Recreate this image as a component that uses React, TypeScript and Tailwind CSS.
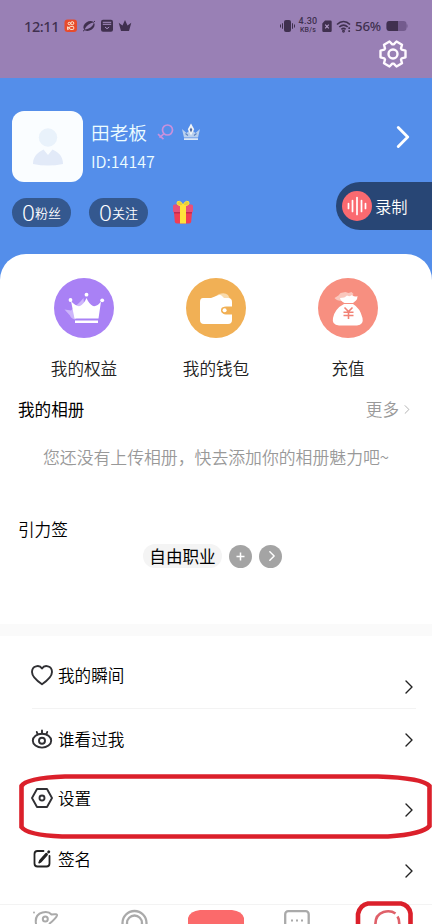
import type { ReactNode } from "react";

const Chevron = ({ className, width = 2 }: { className: string; width?: number }) => (
  <svg viewBox="0 0 8 14" className={className} fill="none" stroke="currentColor" strokeWidth={width} strokeLinecap="round" strokeLinejoin="round">
    <path d="M1 1l6 6-6 6" />
  </svg>
);

const StatusBar = () => (
  <div className="flex h-[52px] items-center pl-6 pr-[24px] text-[#40304f]">
    <span className="w-[40px] font-['Noto_Sans'] text-[14.5px] font-medium leading-none tracking-[-0.4px]">12:11</span>
    <svg width="68" height="14" viewBox="0 0 68 14" fill="none">
      <rect x="0.5" y="0.5" width="12.5" height="12.5" rx="3" fill="#e84b2c" />
      <g stroke="#fff0d8" strokeWidth="1">
        <circle cx="5.3" cy="4.5" r="1.2" />
        <circle cx="8.300" cy="4.200" r="1.500" />
        <rect x="5.700" y="7.400" width="4" height="3" rx="0.800" />
        <path d="M5.500 9L3.600 7.800v2.800l1.900-1.200" />
      </g>
      <ellipse cx="25" cy="7" rx="6" ry="4.500" transform="rotate(-32 25 7)" fill="#40304f" />
      <path d="M20.500 10.500C22.500 6.500 25.500 4 29.800 3.200 29.500 7 25.500 10 20.500 10.500z" fill="#9980b5" />
      <path d="M19 12.200l2-1.700M29.500 3.300L31 2" stroke="#40304f" />
      <rect x="37" y="0.700" width="12" height="12" rx="2" fill="#40304f" />
      <path d="M38.800 3.300h8.400M38.800 5.300h8.400M41 8l2 1.700L45.200 8" stroke="#a890c4" />
      <path d="M54.700 3.800l3.800 2.700L61 1l2.500 5.500 3.800-2.700-2.300 8.200h-8z" fill="#40304f" />
    </svg>
    <div className="ml-auto flex items-center">
      <svg width="15" height="14" viewBox="0 0 15 14" fill="#40304f">
        <rect x="4" y="1" width="7" height="12" rx="2" />
        <path d="M2 4.200h1v5.600H2zM12 4.200h1v5.600h-1zM0 5.500h1v3H0zM14 5.500h1v3h-1z" />
      </svg>
      <div className="mb-px ml-[3px] flex w-[20px] flex-col items-center whitespace-nowrap font-['Roboto'] font-medium">
        <span className="text-[9px] leading-[9px] tracking-[0.3px]">4.30</span>
        <span className="text-[7px] leading-[8px] tracking-[0.2px]">KB/s</span>
      </div>
      <svg className="ml-[4px]" width="10" height="13" viewBox="0 0 10 13">
        <path d="M3 .5h5.500a1.200 1.200 0 011.200 1.200v9a1.200 1.200 0 01-1.200 1.200h-7A1.200 1.200 0 01.3 10.700V3.500z" fill="#40304f" />
        <path d="M3.200 4.700l3.600 3.600M6.800 4.700L3.200 8.300" stroke="#b29cc8" strokeWidth="1.200" />
      </svg>
      <svg className="ml-[4px]" width="16" height="13" viewBox="0 0 16 13" fill="none" stroke="#40304f" strokeWidth="1.700">
        <path d="M1 4.500c4-3.800 9-3.800 13 0M3.300 7c2.700-2.500 5.800-2.500 8.400 0M5.400 9.300c1.500-1.200 2.800-1.200 4.200 0" />
        <circle cx="7.500" cy="11.300" r="0.600" />
        <path d="M13.200 7.300v1.700M13.200 10.300v1.700" />
      </svg>
      <span className="ml-[3px] mt-[2px] w-[29px] font-['Noto_Sans'] text-[13.3px] font-medium leading-none tracking-[-0.2px]">56%</span>
      <svg className="ml-[2px]" width="22" height="12" viewBox="0 0 22 12">
        <path d="M3.500 1h14A3 3 0 0120.500 4v4a3 3 0 01-3 3h-14A3 3 0 01.5 8V4a3 3 0 013-3z" fill="#735b8d" />
        <path d="M3.500 1H12v10H3.500A3 3 0 01.5 8V4a3 3 0 013-3z" fill="#40304f" />
        <path d="M20.500 4.500h1v3h-1z" fill="#735b8d" />
      </svg>
    </div>
  </div>
);

const Gear = () => (
  <svg width="28" height="28" viewBox="0 0 28 28" fill="none" stroke="#fffaff" strokeWidth="2.400" strokeLinejoin="round">
    <path d="M26.500 10.700V17.300L22.700 18.300 22 19.500 23 23.300 17.500 26.500 14.700 23.600H13.300L10.500 26.500 5 23.300 6 19.500 5.300 18.300 1.500 17.300V10.700L5.300 9.700 6 8.500 5 4.700 10.500 1.500 13.300 4.400H14.700L17.500 1.500 23 4.700 22 8.500 22.700 9.700z" />
    <circle cx="14" cy="14" r="4.500" />
  </svg>
);

const Avatar = () => (
  <div className="flex h-[71px] w-[71px] items-center justify-center rounded-[12px] bg-[#fafdff]">
    <svg width="32" height="40" viewBox="0 0 32 40">
      <circle cx="16" cy="10.500" r="9.200" fill="#e9f2fb" />
      <path d="M1 37c0-7.500 4.500-11.500 10.500-14.500L16 28l4.500-5.500C27 25.500 31 29.500 31 37q-15 3-30 0z" fill="#e2eaf8" />
    </svg>
  </div>
);

const CountPill = ({ label }: { label: string }) => (
  <div className="flex h-[29px] w-[59px] items-center rounded-full bg-[#34588f] pl-[10px] text-white">
    <span className="w-[13px] font-['Noto_Sans'] text-[22.5px] leading-[29px]">0</span>
    <span className="text-[13px] leading-[27px]">{label}</span>
  </div>
);

const Gift = () => (
  <svg width="22" height="24" viewBox="0 0 22 24">
    <path d="M1 6q0-1.500 1.500-1.500h17Q21 4.500 21 6v5q0 1.500-1.500 1.500h-17Q1 12.500 1 11z" fill="#e85179" />
    <path d="M2 12.500h18l-.8 9q-.2 2-2 2H4.800q-1.800 0-2-2z" fill="#f23d52" />
    <path d="M2 12h18v1.500H2z" fill="#c22b52" />
    <path d="M8 5h6v18.500H8z" fill="#ffe33b" />
    <path d="M11 5.500Q5.500 6 5 3.500T7.500 1.300Q10 2 11 5.500zQ16.500 6 17 3.500T14.500 1.300Q12 2 11 5.500z" fill="#e6cf38" stroke="#ffe33b" />
  </svg>
);

const Profile = () => (
  <section className="h-[176px] bg-[#548eea] pt-[33px]">
    <div className="flex pl-[12px] pr-[22px]">
      <Avatar />
      <div className="ml-[8px] pt-[9px] text-[#edfdff]">
        <div className="flex h-[24px] items-center">
          <span className="text-[18.7px] leading-[24px]">田老板</span>
          <svg className="ml-[10px]" width="17" height="17" viewBox="0 0 17 17" fill="none" stroke="#c991dc" strokeWidth="1.700">
            <circle cx="10.500" cy="6" r="5" />
            <path d="M7 9.700l-4.500 4M1 10.200l5.500 5" />
          </svg>
          <svg className="ml-[7px]" width="20" height="18" viewBox="0 0 20 18">
            <path d="M1 6l4.500 4 2-1.500L10 1l2.500 7.500 2 1.500L19 6l-2 8.500H3z" fill="#b9d0ee" />
            <path d="M4.500 10.500l2.500 2M15.500 10.500l-2.500 2" stroke="#5d83c1" strokeWidth="1.200" />
            <path d="M10 0.500l3.200 5.800L10 12.500 6.800 6.300z" fill="#f2f5f8" />
            <path d="M10 4.500l1.300 2.200L10 9.500 8.700 6.700z" fill="#516b9e" />
            <path d="M3 15.200h14v1.800H3z" fill="#dce8f6" />
          </svg>
        </div>
        <div className="mt-[5px] text-[16px] leading-[24px]">ID:14147</div>
      </div>
      <Chevron className="ml-auto mt-[15px] h-[22px] w-[14px] text-white" width={1.8} />
    </div>
    <div className="flex">
      <div className="flex items-center gap-[18px] pl-[12px] pt-[13px]">
        <CountPill label="粉丝" />
        <CountPill label="关注" />
        <div className="-mt-px ml-[6px]">
          <Gift />
        </div>
      </div>
      <div className="ml-auto flex h-[48px] w-[96px] items-center rounded-l-full bg-[#284675] pl-[6px]">
        <svg width="30" height="30" viewBox="0 0 30 30">
          <circle cx="15" cy="15" r="15" fill="#fa6a70" />
          <path d="M6.500 12.500v5M10.500 9.500v11M15 6.500v17M19.500 9.500v11M23.500 12.500v5" stroke="#fff" strokeWidth="1.700" strokeLinecap="round" />
        </svg>
        <span className="ml-[3px] text-[16.3px] leading-none text-white">录制</span>
      </div>
    </div>
  </section>
);

const CrownIcon = () => (
  <svg width="60" height="60" viewBox="0 0 60 60">
    <circle cx="30" cy="30" r="30" fill="#a981f5" />
    <path d="M10.500 31.500l6.500 1 9.500-9 3-3.500 1 12-9.500 9.500q-4-1-5-4z" fill="#cdb5fb" />
    <g fill="#fff">
      <circle cx="16.500" cy="22" r="1.900" />
      <circle cx="32.500" cy="16.700" r="1.900" />
      <circle cx="48.200" cy="22.300" r="1.900" />
      <path d="M17 23q5 6 9 5 4-2 6.500-8 2.500 6 6.500 8 4 1 8-4.500L44.500 40.500H20.500zM21 42.500h23V45H21z" />
    </g>
  </svg>
);

const WalletIcon = () => (
  <svg width="60" height="60" viewBox="0 0 60 60">
    <circle cx="30" cy="30" r="30" fill="#f1b055" />
    <path d="M24 22l9-6q6-2 9 1l2 4z" fill="#f9dbac" />
    <path d="M17 20h8l8-3q2-.5 3 1l2 2h4q4 0 4 4v4.500h-6a4 4 0 000 8h6V42q0 4-4 4H18q-4 0-4-4V24q0-4 3-4z" fill="#fff" />
    <path d="M46 29.500h-6.500a3 3 0 000 5.500H46z" fill="#f1b055" />
    <circle cx="38.300" cy="32.300" r="3.300" fill="#f1b055" />
    <circle cx="38.600" cy="32.300" r="2" fill="#fff" />
  </svg>
);

const MoneyIcon = () => (
  <svg width="60" height="60" viewBox="0 0 60 60">
    <circle cx="30" cy="30" r="30" fill="#f78f80" />
    <path d="M16.500 20l4-2.500 2-2.500 5-1 3 1 3-1 2 2-4 4-7 3q-6 0-8-3z" fill="#fac7bd" />
    <path d="M22 20q5 0 7-2.500 3 1.500 5-.5 3 2.500 5.500 1 0 3-1.500 4.500L35 25h-8.500Q22.500 23 22 20zM26 26h9q7 4 9.500 14 1.500 7-5.500 7.500H21Q13.500 47 15 40q2-9.500 11-14z" fill="#fff" />
    <path d="M26.500 29.500l4 4 4-4M25.500 34.200h10M25.500 37.500h10M30.500 33v8" fill="none" stroke="#f18175" strokeWidth="1.600" />
  </svg>
);

const Shortcut = ({ icon, label }: { icon: ReactNode; label: string }) => (
  <div className="flex w-[132px] flex-col items-center">
    {icon}
    <span className="mt-[18px] text-[16.6px] leading-[24px] text-[#222]">{label}</span>
  </div>
);

const HeartIcon = () => (
  <svg width="24" height="24" viewBox="0 0 24 24" fill="none" stroke="#303034" strokeWidth="1.900" strokeLinejoin="round">
    <path d="M12 21.200C8 18.500 2 14 2 9 2 2.500 9.500 1.500 12 5.500 14.500 1.500 22 2.500 22 9 22 14 16 18.500 12 21.200z" />
  </svg>
);

const EyeIcon = () => (
  <svg width="24" height="24" viewBox="0 0 24 24" fill="none" stroke="#303034" strokeWidth="1.900" strokeLinecap="round">
    <ellipse cx="12" cy="13.700" rx="9.200" ry="6.900" />
    <path d="M12 3.500v3M6.800 5l.8 2.200M17.200 5l-.8 2.200" />
    <circle cx="12" cy="13.700" r="3" />
  </svg>
);

const HexIcon = () => (
  <svg width="24" height="24" viewBox="0 0 24 24" fill="none" stroke="#303034" strokeWidth="1.900" strokeLinejoin="round">
    <path d="M7 3h10l5 9-5 9H7l-5-9z" />
    <circle cx="12" cy="12" r="2.500" />
  </svg>
);

const EditIcon = () => (
  <svg width="24" height="24" viewBox="0 0 24 24" fill="none" stroke="#222" strokeWidth="1.800" strokeLinecap="round">
    <path d="M13.500 4H7.500Q4.500 4 4.500 7v9.500q0 3 3 3h9q3 0 3-3V9" />
    <path d="M10.500 14L16.300 7.500" strokeWidth="3.200" />
    <path d="M9.200 15.500l1-1" />
    <path d="M18.600 5l.2-.2" strokeWidth="2.800" />
  </svg>
);

const MenuRow = ({ icon, label, className, arrow }: { icon: ReactNode; label: string; className: string; arrow: string }) => (
  <div className={`flex items-start pl-[30px] pr-[19px] ${className}`}>
    {icon}
    <span className="ml-[4px] text-[16.6px] leading-[24px] text-black">{label}</span>
    <Chevron className={`ml-auto h-[14px] w-[8px] text-[#222] ${arrow}`} width={1.4} />
  </div>
);

const TabBar = () => (
  <nav className="h-[20px] overflow-hidden border-t border-[#f3f3f3] bg-white">
    <svg width="432" height="19" viewBox="0 905 432 19" fill="none">
      <g stroke="#aaa" strokeWidth="2">
        <path d="M36.500 926q-3-11 6-13.500 6-1.500 9 2 6-1 5.500 1-1 3-8 8.500" />
        <circle cx="45.300" cy="919" r="2.500" />
        <circle cx="34" cy="912.500" r="0.400" strokeWidth="1.300" />
        <circle cx="134.500" cy="923" r="12" strokeWidth="2.300" />
        <circle cx="134.500" cy="923" r="7.500" strokeWidth="2.300" />
        <rect x="285.200" y="911.200" width="23.500" height="22" rx="3" strokeWidth="2.300" />
        <path d="M291 920.500h2M296 920.500h2M301 920.500h2" />
      </g>
      <path d="M188 925v-7q2-7 12-8h32q10 1 12 8v7z" fill="#fb6a6b" />
      <path d="M375.500 926q-1-11 8-14 7-2 12 1.500M397.500 916.500q2 3 1.700 8" stroke="#df6069" strokeWidth="2.600" />
    </svg>
  </nav>
);

const App = () => {
  return (
    <div className="relative h-[924px] w-[432px] overflow-hidden bg-white font-['Noto_Sans_CJK_SC',sans-serif] font-[350]">
      <header className="h-[78px] bg-[#9980b5]">
        <StatusBar />
        <div className="-mt-[12px] flex justify-end pr-[25px]">
          <Gear />
        </div>
      </header>
      <Profile />

      <div className="bg-[#548eea]">
        <div className="h-[370px] rounded-t-[26px] bg-white pt-[24px]">
          <div className="flex justify-center">
            <Shortcut icon={<CrownIcon />} label="我的权益" />
            <Shortcut icon={<WalletIcon />} label="我的钱包" />
            <Shortcut icon={<MoneyIcon />} label="充值" />
          </div>
          <div className="mt-[17px] flex items-center pl-[18px] pr-[22px] text-[16.6px] leading-[24px]">
            <span className="font-normal text-black">我的相册</span>
            <span className="ml-auto text-[#999]">更多</span>
            <Chevron className="ml-[5px] h-[9px] w-[6px] text-[#aaa]" width={1.4} />
          </div>
          <p className="mt-[24px] whitespace-nowrap text-center text-[16.85px] leading-[24px] text-[#999]">
            您还没有上传相册，快去添加你的相册魅力吧~
          </p>
          <h2 className="mt-[48px] pl-[18px] text-[16.6px] leading-[24px] text-black">引力签</h2>
          <div className="mt-[3px] flex h-[24px] items-center pl-[143px]">
            <span className="flex h-[24px] w-[79px] items-center justify-center rounded-full bg-[#f4f4f4] text-[16.6px] font-normal leading-[24px] text-black">自由职业</span>
            <span className="ml-[7px] flex h-[23px] w-[23px] items-center justify-center rounded-full bg-[#a4a4a4]">
              <svg width="9" height="9" viewBox="0 0 9 9" stroke="#fff" strokeWidth="1.500">
                <path d="M4.500 0.500v8M0.500 4.500h8" />
              </svg>
            </span>
            <span className="ml-[7px] flex h-[23px] w-[23px] items-center justify-center rounded-full bg-[#a4a4a4]">
              <Chevron className="ml-[2px] h-[10px] w-[6px] text-white" />
            </span>
          </div>
        </div>
      </div>
      <div className="h-[12px] bg-[#fafafa]" />

      {/* menu */}
      <div className="h-[268px] pt-[27px]">
        <MenuRow icon={<HeartIcon />} label="我的瞬间" className="h-[45px]" arrow="mt-[17px]" />
        <div className="ml-[32px] mr-[16px] h-px bg-[#f3f3f3]" />
        <MenuRow icon={<EyeIcon />} label="谁看过我" className="h-[77px] pt-[18px]" arrow="mt-[6px]" />
        <MenuRow icon={<HexIcon />} label="设置" className="h-[61px]" arrow="mt-[17px]" />
        <MenuRow icon={<EditIcon />} label="签名" className="h-[57px]" arrow="mt-[17px]" />
      </div>
      <TabBar />

      {/* hand-drawn highlights over settings and the active tab */}
      <svg className="pointer-events-none absolute left-0 top-0" width="432" height="924" viewBox="0 0 432 924" fill="none" stroke="#db202b" strokeWidth="4.600">
        <path d="M65 776.500H378Q423 778 429.500 786V826Q423 834 388 836.500H62Q27 835 21.500 827V786Q26 778 65 776.500z" />
        <path d="M358 926V914q2-9 10-10.500h33q8 1.500 9.500 10V926" />
      </svg>
    </div>
  );
};

export default App;
